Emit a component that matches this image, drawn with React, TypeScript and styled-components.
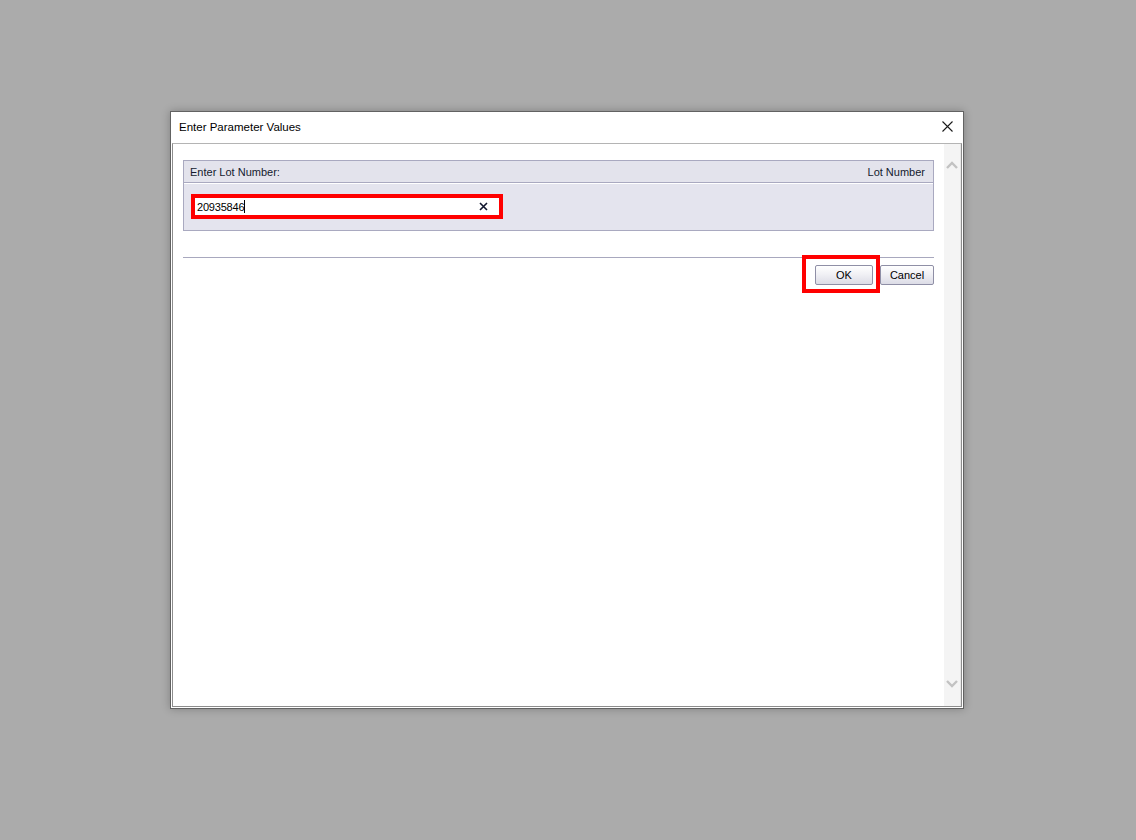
import styled, { createGlobalStyle } from 'styled-components';

const GlobalStyle = createGlobalStyle`
  html, body {
    margin: 0;
    padding: 0;
    background: #ababab;
  }
  * {
    box-sizing: border-box;
  }
`;

const App = () => {
  return (
    <>
      <GlobalStyle />
      <Screen>
        <Window>
          <TitleBar>
            <Title>Enter Parameter Values</Title>
            <CloseButton aria-label="Close">
              <svg width="11" height="11" viewBox="0 0 11 11">
                <path d="M0.5 0.5 L10.5 10.5 M10.5 0.5 L0.5 10.5" stroke="#1a1a1a" strokeWidth="1.1" fill="none" />
              </svg>
            </CloseButton>
          </TitleBar>
          <Client>
            <Content>
              <Panel>
                <PanelHeader>
                  <HeaderText>Enter Lot Number:</HeaderText>
                  <HeaderText>Lot Number</HeaderText>
                </PanelHeader>
                <PanelBody>
                  <InputBox>
                    <Value>20935846</Value>
                    <Caret />
                    <ClearIcon width="9" height="9" viewBox="0 0 9 9">
                      <path d="M1 1 L8 8 M8 1 L1 8" stroke="#10162e" strokeWidth="1.6" fill="none" />
                    </ClearIcon>
                    <Highlight $inset="-4px" />
                  </InputBox>
                </PanelBody>
              </Panel>
              <Divider />
              <ButtonRow>
                <Button $width={58}>
                  OK
                  <Highlight $inset="-11px -8px -9px -14px" />
                </Button>
                <Button $width={54}>Cancel</Button>
              </ButtonRow>
            </Content>
            <ScrollBar>
              <svg width="12" height="8" viewBox="0 0 12 8">
                <path d="M1 7 L6 2 L11 7" stroke="#c2c2c2" strokeWidth="2.4" fill="none" />
              </svg>
              <svg width="12" height="8" viewBox="0 0 12 8">
                <path d="M1 1 L6 6 L11 1" stroke="#c2c2c2" strokeWidth="2.4" fill="none" />
              </svg>
            </ScrollBar>
          </Client>
        </Window>
      </Screen>
    </>
  );
};

export default App;

const Screen = styled.div`
  width: 1136px;
  height: 840px;
  padding: 111px 0 0 170px;
`;
const Window = styled.div`
  width: 794px;
  height: 598px;
  background: #ffffff;
  border: 1px solid #626262;
  box-shadow: 0 0 8px rgba(0, 0, 0, 0.25);
  display: flex;
  flex-direction: column;
`;
const TitleBar = styled.div`
  height: 31px;
  display: flex;
  align-items: center;
  justify-content: space-between;
  padding: 0 0 2px 8px;
`;
const Title = styled.span`
  font-family: 'Liberation Sans', Arial, sans-serif;
  font-size: 11.5px;
  color: #000000;
`;
const CloseButton = styled.div`
  width: 32px;
  height: 29px;
  display: flex;
  align-items: center;
  justify-content: center;
`;
const Client = styled.div`
  flex: 1;
  display: flex;
  margin: 0 1px 1px 1px;
  border: 1px solid #8d8d8d;
  border-top-color: #b4b4b4;
`;
const Content = styled.div`
  flex: 1;
  padding: 16px 10px 0 10px;
  display: flex;
  flex-direction: column;
`;
const Panel = styled.div`
  border: 1px solid #a9a9c0;
  background: #e3e3ec;
  display: flex;
  flex-direction: column;
`;
const PanelHeader = styled.div`
  height: 22px;
  display: flex;
  align-items: center;
  justify-content: space-between;
  padding: 0 8px 0 6px;
  border-bottom: 1px solid #a9a9c0;
`;
const HeaderText = styled.span`
  font-family: 'Liberation Sans', Arial, sans-serif;
  font-size: 11px;
  color: #141a2e;
`;
const PanelBody = styled.div`
  height: 47px;
  border-top: 1px solid #ffffff;
  background: #e4e4ee;
  padding: 13px 0 0 10px;
`;
const InputBox = styled.div`
  position: relative;
  width: 307px;
  height: 20px;
  background: #ffffff;
  border-top: 1px solid #6e6e6e;
  border-left: 1px solid #9a9a9a;
  border-bottom: 2px solid #dcdcdc;
  border-right: 2px solid #dcdcdc;
  display: flex;
  align-items: center;
  padding-left: 2px;
`;
const Value = styled.span`
  font-family: 'Liberation Sans', Arial, sans-serif;
  font-size: 11px;
  color: #000000;
  letter-spacing: -0.2px;
`;
const Caret = styled.span`
  width: 1px;
  height: 13px;
  background: #000000;
`;
const ClearIcon = styled.svg`
  margin-left: auto;
  margin-right: 11px;
`;
const Highlight = styled.span<{ $inset: string }>`
  position: absolute;
  inset: ${(p) => p.$inset};
  border: 4px solid #ff0000;
  pointer-events: none;
`;
const Divider = styled.div`
  margin-top: 26px;
  height: 1px;
  background: #a8a8be;
`;
const ButtonRow = styled.div`
  display: flex;
  justify-content: flex-end;
  gap: 7px;
  margin-top: 7px;
`;
const Button = styled.div<{ $width: number }>`
  position: relative;
  width: ${(p) => p.$width}px;
  height: 20px;
  border: 1px solid #8f8fa6;
  border-radius: 2px;
  background: linear-gradient(#ffffff, #f1f1f5 45%, #dcdce6);
  display: flex;
  align-items: center;
  justify-content: center;
  font-family: 'Liberation Sans', Arial, sans-serif;
  font-size: 11px;
  color: #000000;
`;
const ScrollBar = styled.div`
  width: 17px;
  background: #f4f4f4;
  border-right: 1px solid #e6e6e6;
  display: flex;
  flex-direction: column;
  justify-content: space-between;
  align-items: center;
  padding: 17px 0 18px 0;
`;
